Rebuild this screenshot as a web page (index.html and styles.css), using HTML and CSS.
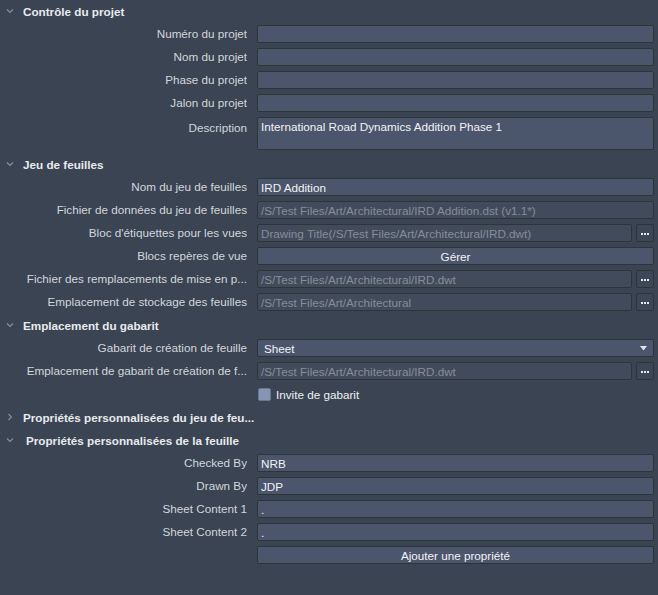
FILE: index.html
```html
<!DOCTYPE html>
<html lang="fr">
<head>
<meta charset="utf-8">
<title>Gestionnaire du jeu de feuilles</title>
<link rel="stylesheet" href="styles.css">
</head>
<body>
<div class="panel">
  <div class="head"><svg class="chev" viewBox="0 0 8 8"><path d="M1 2.5 L4 5.5 L7 2.5"/></svg><span>Contrôle du projet</span></div>
  <div class="row"><div class="label">Numéro du projet</div><div class="field"></div></div>
  <div class="row"><div class="label">Nom du projet</div><div class="field"></div></div>
  <div class="row"><div class="label">Phase du projet</div><div class="field"></div></div>
  <div class="row"><div class="label">Jalon du projet</div><div class="field"></div></div>
  <div class="row tall"><div class="label">Description</div><div class="field tallf">International Road Dynamics Addition Phase 1</div></div>

  <div class="head"><svg class="chev" viewBox="0 0 8 8"><path d="M1 2.5 L4 5.5 L7 2.5"/></svg><span>Jeu de feuilles</span></div>
  <div class="row"><div class="label">Nom du jeu de feuilles</div><div class="field">IRD Addition</div></div>
  <div class="row"><div class="label">Fichier de données du jeu de feuilles</div><div class="field off">/S/Test Files/Art/Architectural/IRD Addition.dst (v1.1*)</div></div>
  <div class="row"><div class="label">Bloc d'étiquettes pour les vues</div><div class="combo"><div class="field off">Drawing Title(/S/Test Files/Art/Architectural/IRD.dwt)</div><div class="more"><i></i><i></i><i></i></div></div></div>
  <div class="row"><div class="label">Blocs repères de vue</div><div class="field btn">Gérer</div></div>
  <div class="row"><div class="label">Fichier des remplacements de mise en p...</div><div class="combo"><div class="field off">/S/Test Files/Art/Architectural/IRD.dwt</div><div class="more"><i></i><i></i><i></i></div></div></div>
  <div class="row"><div class="label">Emplacement de stockage des feuilles</div><div class="combo"><div class="field off">/S/Test Files/Art/Architectural</div><div class="more"><i></i><i></i><i></i></div></div></div>

  <div class="head"><svg class="chev" viewBox="0 0 8 8"><path d="M1 2.5 L4 5.5 L7 2.5"/></svg><span>Emplacement du gabarit</span></div>
  <div class="row"><div class="label">Gabarit de création de feuille</div><div class="field select"><span>Sheet</span><svg class="caret" viewBox="0 0 7 5"><path d="M0 0 H7 L3.5 4.5 Z"/></svg></div></div>
  <div class="row"><div class="label">Emplacement de gabarit de création de f...</div><div class="combo"><div class="field off">/S/Test Files/Art/Architectural/IRD.dwt</div><div class="more"><i></i><i></i><i></i></div></div></div>
  <div class="row"><div class="label"></div><div class="check"><span class="box"></span><span>Invite de gabarit</span></div></div>

  <div class="head"><svg class="chev" viewBox="0 0 8 8"><path d="M2.5 1 L5.5 4 L2.5 7"/></svg><span>Propriétés personnalisées du jeu de feu...</span></div>
  <div class="head"><svg class="chev" viewBox="0 0 8 8"><path d="M1 2.5 L4 5.5 L7 2.5"/></svg><span class="indent">Propriétés personnalisées de la feuille</span></div>
  <div class="row"><div class="label">Checked By</div><div class="field">NRB</div></div>
  <div class="row"><div class="label">Drawn By</div><div class="field">JDP</div></div>
  <div class="row"><div class="label">Sheet Content 1</div><div class="field">.</div></div>
  <div class="row"><div class="label">Sheet Content 2</div><div class="field">.</div></div>
  <div class="row"><div class="label"></div><div class="field btn">Ajouter une propriété</div></div>
</div>
</body>
</html>
```
FILE: styles.css
```css
html, body {
  margin: 0;
  background: #3a4453;
}
body {
  font-family: "Liberation Sans", Arial, sans-serif;
  font-size: 11.7px;
  color: #d3d6db;
  height: 595px;
  overflow: hidden;
}
.panel {
  display: flex;
  flex-direction: column;
  gap: 5px;
  padding: 2px 4px 0 0;
}
.head {
  height: 18px;
  display: flex;
  align-items: center;
  font-weight: bold;
  color: #e8eaed;
  white-space: nowrap;
}
.chev {
  width: 8px;
  height: 8px;
  margin: 0 9px 0 6px;
  flex: none;
}
.chev path {
  fill: none;
  stroke: #8a919b;
  stroke-width: 1.1;
}
.indent {
  margin-left: 3px;
}
.row {
  display: grid;
  grid-template-columns: 247px 1fr;
  column-gap: 10px;
  height: 18px;
  align-items: center;
}
.row.tall {
  height: 33px;
  align-items: start;
}
.row.tall .label {
  padding-top: 3px;
}
.label {
  padding-left: 10px;
  text-align: right;
  white-space: nowrap;
  overflow: hidden;
  line-height: 16px;
}
.field {
  box-sizing: border-box;
  height: 18px;
  border: 1px solid #2d3637;
  border-radius: 2px;
  background: #4b556b;
  color: #f2f3f5;
  padding: 0 3px;
  display: flex;
  align-items: center;
  white-space: nowrap;
  overflow: hidden;
  min-width: 0;
}
.field.tallf {
  height: 33px;
  align-items: flex-start;
  padding-top: 2px;
}
.field.off {
  background: #424b5c;
  color: #868d98;
}
.field.btn {
  justify-content: center;
}
.field.select {
  justify-content: space-between;
  padding: 0 6px 0 6px;
}
.caret {
  width: 7px;
  height: 5px;
}
.caret path {
  fill: #dfe2e6;
}
.combo {
  display: flex;
  gap: 4px;
  min-width: 0;
}
.combo .field {
  flex: 1;
}
.more {
  box-sizing: border-box;
  flex: none;
  width: 18px;
  height: 18px;
  border: 1px solid #2d3637;
  border-radius: 2px;
  background: #3d4656;
  display: flex;
  align-items: center;
  justify-content: center;
  gap: 1px;
  padding-top: 2px;
}
.more i {
  width: 2px;
  height: 2px;
  background: #e6e8eb;
}
.check {
  display: flex;
  align-items: center;
  gap: 5px;
  padding-left: 1px;
  color: #eef0f2;
}
.box {
  box-sizing: border-box;
  width: 13px;
  height: 13px;
  border-radius: 2px;
  background: #8794b2;
  border: 1px solid #6b7690;
}
```
